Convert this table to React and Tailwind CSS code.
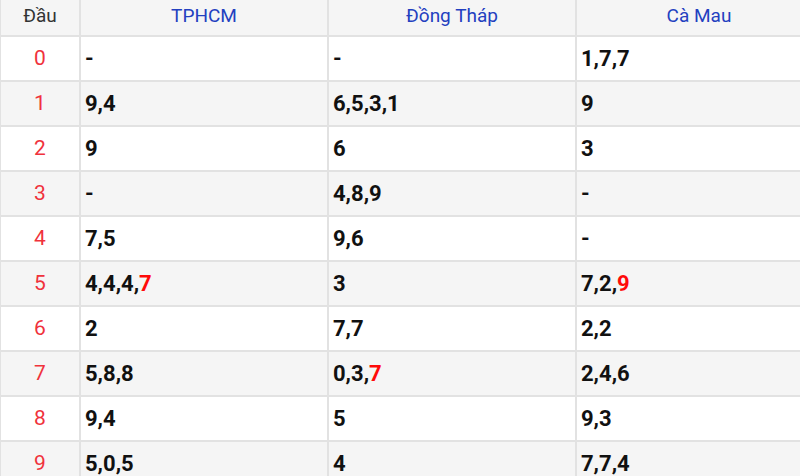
import React from "react";

const rows = [
  ["0", ["-"], ["-"], ["1,7,7"]],
  ["1", ["9,4"], ["6,5,3,1"], ["9"]],
  ["2", ["9"], ["6"], ["3"]],
  ["3", ["-"], ["4,8,9"], ["-"]],
  ["4", ["7,5"], ["9,6"], ["-"]],
  ["5", ["4,4,4,", "7"], ["3"], ["7,2,", "9"]],
  ["6", ["2"], ["7,7"], ["2,2"]],
  ["7", ["5,8,8"], ["0,3,", "7"], ["2,4,6"]],
  ["8", ["9,4"], ["5"], ["9,3"]],
  ["9", ["5,0,5"], ["4"], ["7,7,4"]],
];

function Cell({ parts }) {
  return (
    <td className="border-2 border-[#e2e2e2] pl-[4px] text-[22px] font-bold text-[#111] h-[45px]">
      {parts[0]}
      {parts[1] && <span className="text-[#ff0a0a]">{parts[1]}</span>}
    </td>
  );
}

export default function App() {
  return (
    <div className="w-[800px] h-[476px] overflow-hidden bg-white" style={{ fontFamily: "Roboto, 'Liberation Sans', sans-serif" }}>
      <table className="border-collapse w-[822px] table-fixed -mt-[2px] -ml-[1px]">
        <colgroup>
          <col className="w-[80px]" />
          <col className="w-[248px]" />
          <col className="w-[248px]" />
          <col className="w-[246px]" />
        </colgroup>
        <thead>
          <tr className="bg-[#f5f5f5] h-[37px]">
            <th className="border-2 border-[#e2e2e2] font-normal text-[19px] text-[#333] pb-[3px]">Đầu</th>
            <th className="border-2 border-[#e2e2e2] font-normal text-[19px] text-[#2340c0] pb-[3px]">TPHCM</th>
            <th className="border-2 border-[#e2e2e2] font-normal text-[19px] text-[#2340c0] pb-[3px]">Đồng Tháp</th>
            <th className="border-2 border-[#e2e2e2] font-normal text-[19px] text-[#2340c0] pb-[3px]">Cà Mau</th>
          </tr>
        </thead>
        <tbody>
          {rows.map((r, i) => (
            <tr key={i} className={i % 2 === 1 ? "bg-[#f5f5f5]" : "bg-white"}>
              <td className="border-2 border-[#e2e2e2] text-center text-[21px] text-[#f0323c] h-[45px]">{r[0]}</td>
              <Cell parts={r[1]} />
              <Cell parts={r[2]} />
              <Cell parts={r[3]} />
            </tr>
          ))}
        </tbody>
      </table>
    </div>
  );
}
